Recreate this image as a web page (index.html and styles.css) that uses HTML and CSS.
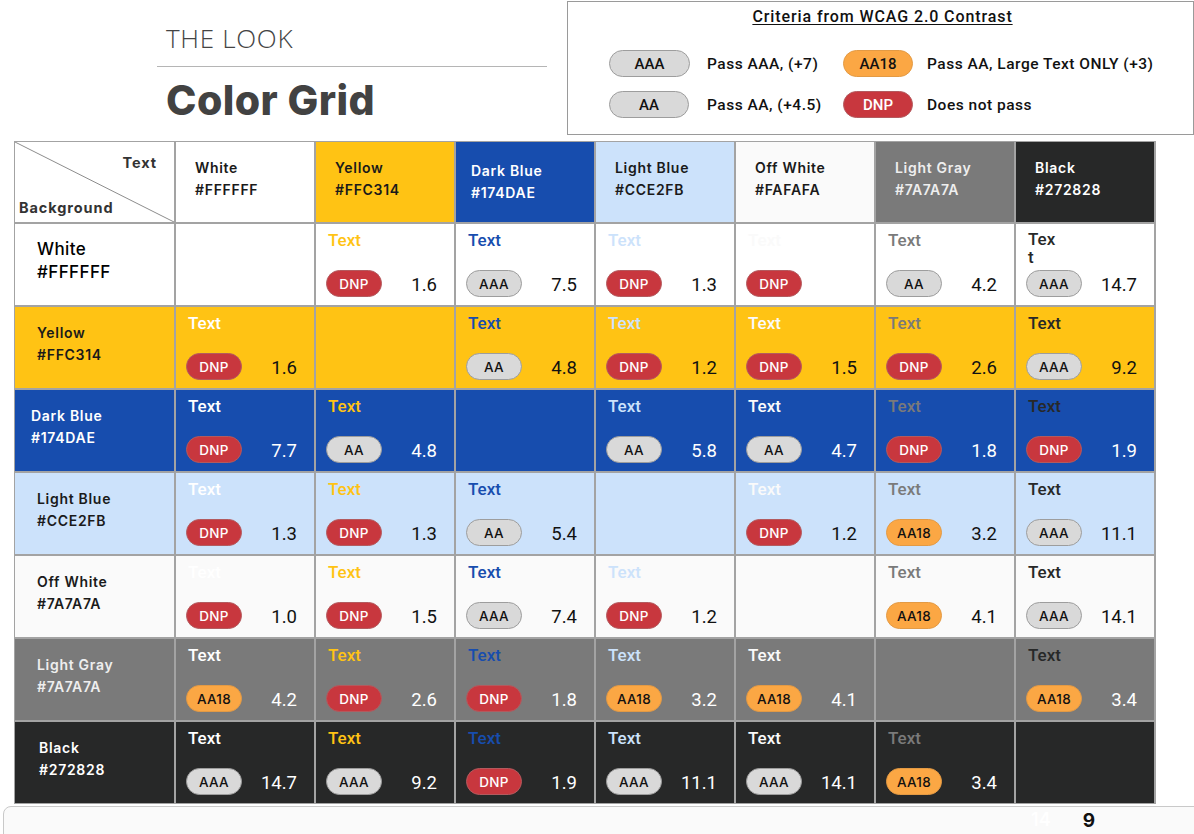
FILE: index.html
```html
<!DOCTYPE html>
<html lang="en">
<head>
<meta charset="utf-8">
<title>Color Grid</title>
<link rel="stylesheet" href="styles.css">
</head>
<body>
<div class="page">
  <header class="top">
    <div class="title">
      <div class="kicker">THE LOOK</div>
      <div class="rule"></div>
      <h1>Color Grid</h1>
    </div>
    <section class="legend">
      <div class="legend-title">Criteria from WCAG 2.0 Contrast</div>
      <div class="legend-grid">
        <span class="lb aaa w81">AAA</span><span class="ll l1">Pass AAA, (+7)</span><span class="lb aa18">AA18</span><span class="ll l2">Pass AA, Large Text ONLY (+3)</span>
        <span class="lb aa w80">AA</span><span class="ll l1">Pass AA, (+4.5)</span><span class="lb dnp">DNP</span><span class="ll l2">Does not pass</span>
      </div>
    </section>
  </header>

  <main class="grid">
    <!-- header row -->
    <div class="corner">
      <svg class="diag" viewBox="0 0 161 82" preserveAspectRatio="none"><line x1="0" y1="0" x2="161" y2="82"/></svg>
      <span class="corner-t">Text</span>
      <span class="corner-b">Background</span>
    </div>
    <div class="colhead bg-white"><span>White</span><span>#FFFFFF</span></div>
    <div class="colhead bg-yellow"><span>Yellow</span><span>#FFC314</span></div>
    <div class="colhead bg-blue inv low"><span>Dark Blue</span><span>#174DAE</span></div>
    <div class="colhead bg-lblue"><span>Light Blue</span><span>#CCE2FB</span></div>
    <div class="colhead bg-off"><span>Off White</span><span>#FAFAFA</span></div>
    <div class="colhead bg-gray inv2"><span>Light Gray</span><span>#7A7A7A</span></div>
    <div class="colhead bg-black inv"><span>Black</span><span>#272828</span></div>

    <!-- row: White -->
    <div class="rowhead bg-white big"><span>White</span><span>#FFFFFF</span></div>
    <div class="cell bg-white"></div>
    <div class="cell bg-white"><span class="t c-yellow">Text</span><div class="ft"><span class="b dnp">DNP</span><span class="n">1.6</span></div></div>
    <div class="cell bg-white"><span class="t c-blue">Text</span><div class="ft"><span class="b aaa">AAA</span><span class="n">7.5</span></div></div>
    <div class="cell bg-white"><span class="t c-lblue">Text</span><div class="ft"><span class="b dnp">DNP</span><span class="n">1.3</span></div></div>
    <div class="cell bg-white"><span class="t c-off">Text</span><div class="ft"><span class="b dnp">DNP</span><span class="n"></span></div></div>
    <div class="cell bg-white"><span class="t c-gray">Text</span><div class="ft"><span class="b aa">AA</span><span class="n">4.2</span></div></div>
    <div class="cell bg-white"><span class="t c-black wrap">Tex<br>t</span><div class="ft"><span class="b aaa">AAA</span><span class="n">14.7</span></div></div>

    <!-- row: Yellow -->
    <div class="rowhead bg-yellow"><span>Yellow</span><span>#FFC314</span></div>
    <div class="cell bg-yellow"><span class="t c-white">Text</span><div class="ft"><span class="b dnp">DNP</span><span class="n">1.6</span></div></div>
    <div class="cell bg-yellow"></div>
    <div class="cell bg-yellow"><span class="t c-blue">Text</span><div class="ft"><span class="b aa">AA</span><span class="n">4.8</span></div></div>
    <div class="cell bg-yellow"><span class="t c-lblue">Text</span><div class="ft"><span class="b dnp">DNP</span><span class="n">1.2</span></div></div>
    <div class="cell bg-yellow"><span class="t c-off">Text</span><div class="ft"><span class="b dnp">DNP</span><span class="n">1.5</span></div></div>
    <div class="cell bg-yellow"><span class="t c-gray">Text</span><div class="ft"><span class="b dnp">DNP</span><span class="n">2.6</span></div></div>
    <div class="cell bg-yellow"><span class="t c-black">Text</span><div class="ft"><span class="b aaa">AAA</span><span class="n">9.2</span></div></div>

    <!-- row: Dark Blue -->
    <div class="rowhead bg-blue inv"><span>Dark Blue</span><span>#174DAE</span></div>
    <div class="cell bg-blue dk"><span class="t c-white">Text</span><div class="ft"><span class="b dnp">DNP</span><span class="n">7.7</span></div></div>
    <div class="cell bg-blue dk"><span class="t c-yellow">Text</span><div class="ft"><span class="b aa">AA</span><span class="n">4.8</span></div></div>
    <div class="cell bg-blue dk"></div>
    <div class="cell bg-blue dk"><span class="t c-lblue">Text</span><div class="ft"><span class="b aa">AA</span><span class="n">5.8</span></div></div>
    <div class="cell bg-blue dk"><span class="t c-off">Text</span><div class="ft"><span class="b aa">AA</span><span class="n">4.7</span></div></div>
    <div class="cell bg-blue dk"><span class="t c-gray">Text</span><div class="ft"><span class="b dnp">DNP</span><span class="n">1.8</span></div></div>
    <div class="cell bg-blue dk"><span class="t c-black">Text</span><div class="ft"><span class="b dnp">DNP</span><span class="n">1.9</span></div></div>

    <!-- row: Light Blue -->
    <div class="rowhead bg-lblue"><span>Light Blue</span><span>#CCE2FB</span></div>
    <div class="cell bg-lblue"><span class="t c-white">Text</span><div class="ft"><span class="b dnp">DNP</span><span class="n">1.3</span></div></div>
    <div class="cell bg-lblue"><span class="t c-yellow">Text</span><div class="ft"><span class="b dnp">DNP</span><span class="n">1.3</span></div></div>
    <div class="cell bg-lblue"><span class="t c-blue">Text</span><div class="ft"><span class="b aa">AA</span><span class="n">5.4</span></div></div>
    <div class="cell bg-lblue"></div>
    <div class="cell bg-lblue"><span class="t c-off">Text</span><div class="ft"><span class="b dnp">DNP</span><span class="n">1.2</span></div></div>
    <div class="cell bg-lblue"><span class="t c-gray">Text</span><div class="ft"><span class="b aa18">AA18</span><span class="n">3.2</span></div></div>
    <div class="cell bg-lblue"><span class="t c-black">Text</span><div class="ft"><span class="b aaa">AAA</span><span class="n">11.1</span></div></div>

    <!-- row: Off White -->
    <div class="rowhead bg-off"><span>Off White</span><span>#7A7A7A</span></div>
    <div class="cell bg-off"><span class="t c-white">Text</span><div class="ft"><span class="b dnp">DNP</span><span class="n">1.0</span></div></div>
    <div class="cell bg-off"><span class="t c-yellow">Text</span><div class="ft"><span class="b dnp">DNP</span><span class="n">1.5</span></div></div>
    <div class="cell bg-off"><span class="t c-blue">Text</span><div class="ft"><span class="b aaa">AAA</span><span class="n">7.4</span></div></div>
    <div class="cell bg-off"><span class="t c-lblue">Text</span><div class="ft"><span class="b dnp">DNP</span><span class="n">1.2</span></div></div>
    <div class="cell bg-off"></div>
    <div class="cell bg-off"><span class="t c-gray">Text</span><div class="ft"><span class="b aa18">AA18</span><span class="n">4.1</span></div></div>
    <div class="cell bg-off"><span class="t c-black">Text</span><div class="ft"><span class="b aaa">AAA</span><span class="n">14.1</span></div></div>

    <!-- row: Light Gray -->
    <div class="rowhead bg-gray inv2"><span>Light Gray</span><span>#7A7A7A</span></div>
    <div class="cell bg-gray dk"><span class="t c-white">Text</span><div class="ft"><span class="b aa18">AA18</span><span class="n">4.2</span></div></div>
    <div class="cell bg-gray dk"><span class="t c-yellow">Text</span><div class="ft"><span class="b dnp">DNP</span><span class="n">2.6</span></div></div>
    <div class="cell bg-gray dk"><span class="t c-blue">Text</span><div class="ft"><span class="b dnp">DNP</span><span class="n">1.8</span></div></div>
    <div class="cell bg-gray dk"><span class="t c-lblue">Text</span><div class="ft"><span class="b aa18">AA18</span><span class="n">3.2</span></div></div>
    <div class="cell bg-gray dk"><span class="t c-off">Text</span><div class="ft"><span class="b aa18">AA18</span><span class="n">4.1</span></div></div>
    <div class="cell bg-gray dk"></div>
    <div class="cell bg-gray dk"><span class="t c-black">Text</span><div class="ft"><span class="b aa18">AA18</span><span class="n">3.4</span></div></div>

    <!-- row: Black -->
    <div class="rowhead bg-black inv"><span>Black</span><span>#272828</span></div>
    <div class="cell bg-black dk"><span class="t c-white">Text</span><div class="ft"><span class="b aaa">AAA</span><span class="n">14.7</span></div></div>
    <div class="cell bg-black dk"><span class="t c-yellow">Text</span><div class="ft"><span class="b aaa">AAA</span><span class="n">9.2</span></div></div>
    <div class="cell bg-black dk"><span class="t c-blue">Text</span><div class="ft"><span class="b dnp">DNP</span><span class="n">1.9</span></div></div>
    <div class="cell bg-black dk"><span class="t c-lblue">Text</span><div class="ft"><span class="b aaa">AAA</span><span class="n">11.1</span></div></div>
    <div class="cell bg-black dk"><span class="t c-off">Text</span><div class="ft"><span class="b aaa">AAA</span><span class="n">14.1</span></div></div>
    <div class="cell bg-black dk"><span class="t c-gray">Text</span><div class="ft"><span class="b aa18">AA18</span><span class="n">3.4</span></div></div>
    <div class="cell bg-black dk"></div>
  </main>

  <footer class="footbar"><span class="ghost">14</span><span class="pg">9</span></footer>
</div>
</body>
</html>
```

FILE: styles.css
```css
* { box-sizing: border-box; }
html, body { margin: 0; padding: 0; background: #ffffff; }
body {
  font-family: Inter, "Noto Sans", "Liberation Sans", sans-serif;
  color: #111;
  width: 1194px;
  height: 834px;
  overflow: hidden;
}
.page { display: flex; flex-direction: column; }

/* ---------- top ---------- */
.top { display: flex; align-items: flex-start; height: 141px; }
.title { margin-left: 157px; width: 390px; padding-top: 20px; }
.kicker {
  font-family: "Open Sans", "Liberation Sans", sans-serif;
  font-weight: 300;
  font-size: 26px;
  line-height: 36px;
  letter-spacing: 0.7px;
  color: #444;
  padding-left: 9px;
}
.rule { height: 1px; background: #b5b5b5; margin-top: 10px; }
h1 {
  margin: 8px 0 0 0;
  padding-left: 9px;
  font-family: Inter, "Noto Sans", sans-serif;
  font-weight: 800;
  font-size: 41px;
  line-height: 50px;
  letter-spacing: 0.4px;
  color: #424242;
}

.legend {
  margin-left: 20px;
  margin-top: 1px;
  width: 627px;
  height: 134px;
  border: 1px solid #9a9a9a;
  font-family: Roboto, "Liberation Sans", sans-serif;
}
.legend-title {
  text-align: center;
  font-weight: 500;
  font-size: 16px;
  line-height: 18px;
  margin-top: 6px;
  padding-left: 4px;
  text-decoration: underline;
  text-underline-offset: 2px;
  letter-spacing: 0.9px;
  color: #111;
}
.legend-grid {
  display: grid;
  grid-template-columns: 81px 153px 84px auto;
  row-gap: 14px;
  margin: 24px 0 0 41px;
  align-items: center;
}
.lb {
  height: 27px;
  width: 70px;
  border-radius: 14px;
  display: flex;
  align-items: center;
  justify-content: center;
  font-size: 15px;
  font-weight: 500;
  border: 1px solid #9d9d9d;
}
.lb.w81 { width: 81px; }
.lb.w80 { width: 80px; }
.ll { font-size: 15.5px; font-weight: 500; letter-spacing: 0.5px; color: #111; }
.l1 { padding-left: 17px; }
.l2 { padding-left: 0; }

/* ---------- badges ---------- */
.aaa, .aa { background: #d9d9d9; color: #111; }
.aa18 { background: #fba744; color: #111; border-color: #e39a44 !important; }
.dnp { background: #c8373e; color: #fff; border-color: #b35a5e !important; }

/* ---------- grid ---------- */
.grid {
  margin-left: 14px;
  width: 1142px;
  display: grid;
  grid-template-columns: 159px repeat(7, 138px);
  grid-template-rows: 80px repeat(7, 81px);
  gap: 2px;
  padding: 1px;
  background: #a3a3a3;
}

.bg-white { background: #ffffff; }
.bg-yellow { background: #ffc314; }
.bg-blue { background: #174dae; }
.bg-lblue { background: #cce2fb; }
.bg-off { background: #fafafa; }
.bg-gray { background: #7a7a7a; }
.bg-black { background: #272828; }

.corner {
  position: relative;
  background: #fff;
  font-weight: 700;
  font-size: 14.5px;
  color: #333;
  letter-spacing: 0.9px;
}
.diag { position: absolute; inset: 0; width: 100%; height: 100%; }
.diag line { stroke: #8a8a8a; stroke-width: 1; }
.corner-t { position: absolute; right: 17px; top: 12px; }
.corner-b { position: absolute; left: 4px; bottom: 6px; }

.colhead {
  display: flex;
  flex-direction: column;
  padding: 15px 0 0 19px;
  font-size: 14px;
  font-weight: 600;
  line-height: 22px;
  letter-spacing: 0.7px;
  color: #1a1a1a;
}
.colhead.low { padding-top: 18px; padding-left: 15px; }
.inv { color: #fff; }
.inv2 { color: #eeeeee; }

.rowhead {
  display: flex;
  flex-direction: column;
  justify-content: center;
  padding: 0 0 8px 22px;
  font-size: 14px;
  font-weight: 600;
  line-height: 22px;
  letter-spacing: 0.7px;
  color: #1a1a1a;
}
.rowhead.big { font-size: 17px; font-weight: 500; line-height: 23px; letter-spacing: 0.4px; color: #000; }
.rowhead.bg-blue { padding-left: 16px; }
.rowhead.bg-black { padding-left: 24px; }
.rowhead.inv { color: #fff; }
.rowhead.inv2 { color: #eeeeee; }

.cell {
  display: flex;
  flex-direction: column;
  padding: 6px 17px 8px 10px;
}
.t {
  font-family: Roboto, "Liberation Sans", sans-serif;
  font-weight: 500;
  font-size: 17px;
  line-height: 20px;
  padding-left: 2px;
}
.t.wrap { line-height: 18px; height: 20px; }
.c-white { color: #ffffff; }
.c-yellow { color: #ffc314; }
.c-blue { color: #174dae; }
.c-lblue { color: #cce2fb; }
.c-off { color: #fafafa; }
.c-gray { color: #7a7a7a; }
.c-black { color: #272828; }

.ft {
  margin-top: auto;
  display: flex;
  align-items: center;
  justify-content: space-between;
}
.b {
  width: 56px;
  height: 27px;
  border-radius: 14px;
  border: 1px solid #9d9d9d;
  display: flex;
  align-items: center;
  justify-content: center;
  font-size: 13.5px;
  font-weight: 500;
  letter-spacing: 0.3px;
}
.n {
  font-family: Roboto, "Liberation Sans", sans-serif;
  font-size: 18.5px;
  color: #111;
  padding-top: 2px;
}
.dk .n { color: #fff; }

/* ---------- footer ---------- */
.footbar {
  margin: 2px 0 0 3px;
  height: 40px;
  width: 1200px;
  border: 1px solid #c9c9c9;
  border-radius: 8px;
  background: #fafafa;
  display: flex;
  justify-content: flex-end;
  align-items: flex-start;
  padding: 2px 0 0 0;
}
.ghost { color: #ffffff; font-size: 18px; font-weight: 600; margin-right: 32px; }
.pg { color: #111; font-size: 19px; font-weight: 700; margin-right: 107px; }
```
